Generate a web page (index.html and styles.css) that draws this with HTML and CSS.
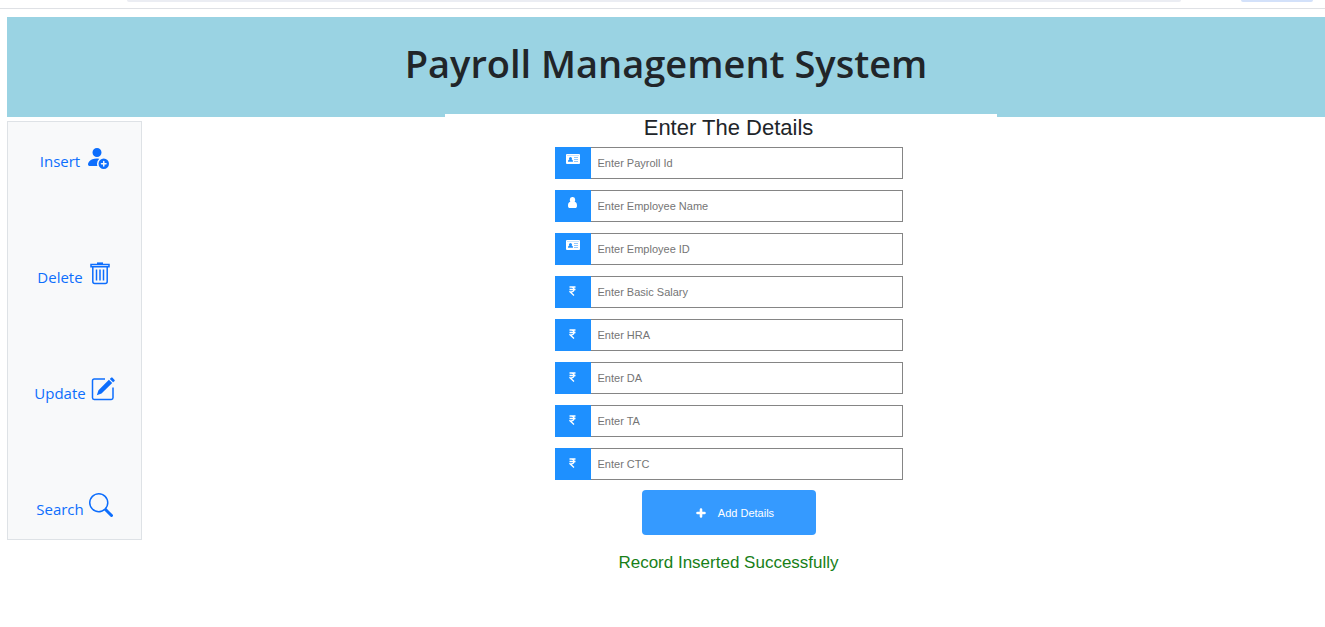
FILE: index.html
```
<!DOCTYPE html>
<html lang="en">
<head>
<meta charset="utf-8">
<title>Payroll Management System</title>
<link rel="stylesheet" href="styles.css">
</head>
<body>
<svg class="sprite" aria-hidden="true">
  <symbol id="card" viewBox="0 0 14 10">
    <path fill="currentColor" fill-rule="evenodd" d="M1 0h12a1 1 0 0 1 1 1v8a1 1 0 0 1-1 1H1a1 1 0 0 1-1-1V1a1 1 0 0 1 1-1zM2 7.700h5C7 6.300 6.300 5.700 5.600 5.600a1.500 1.500 0 1 0-2.200 0C2.700 5.700 2 6.300 2 7.700zM8 3.600v.5h4v-.5zM8 5.400v.5h4v-.5zM8 7.200v.5h4v-.5zM1 1.400v.3h12v-.3z"/>
  </symbol>
  <symbol id="user" viewBox="0 0 9 11">
    <path fill="currentColor" d="M4.500 0a2.600 2.800 0 0 1 2.700 2.900q0 1.100-.6 1.900C8.400 5 9 6.800 9 8.700 9 10.200 8.300 11 7.200 11H1.800C.7 11 0 10.200 0 8.700 0 6.800.6 5 2.400 4.800q-.6-.8-.6-1.900A2.600 2.800 0 0 1 4.500 0z"/>
  </symbol>
  <symbol id="rupee" viewBox="0 0 7 10">
    <path fill="none" stroke="currentColor" stroke-width="1.300" d="M.5 1h6M.5 3.500h6M.7 1h1.800c3.300 0 3.300 4.800 0 4.800H1l4 3.700"/>
  </symbol>
</svg>

<div class="browser-edge" aria-hidden="true"><span class="address"></span><span class="chip"></span></div>

<div class="page">
  <header class="banner"><h1 class="title">Payroll Management System</h1></header>
  <div class="content">
    <nav class="sidebar">
      <a class="nav-link" href="#insert">Insert
        <svg class="nav-icon" viewBox="0 0 16 16" fill="currentColor"><path d="M12.500 16a3.500 3.500 0 1 0 0-7 3.500 3.500 0 0 0 0 7m.5-5v1h1a.5.5 0 0 1 0 1h-1v1a.5.5 0 0 1-1 0v-1h-1a.5.5 0 0 1 0-1h1v-1a.5.5 0 0 1 1 0m-2-6a3 3 0 1 1-6 0 3 3 0 0 1 6 0"/><path d="M2 13c0 1 1 1 1 1h5.256A4.500 4.500 0 0 1 8 12.500a4.500 4.500 0 0 1 1.544-3.393Q8.844 9.002 8 9c-5 0-6 3-6 4"/></svg>
      </a>
      <a class="nav-link" href="#delete">Delete
        <svg class="nav-icon" viewBox="0 0 24 24" fill="none" stroke="currentColor" stroke-width="1.500"><path d="M3 3.500h18v2.200H3zM4.800 6v14.500q0 2 2 2h10.400q2 0 2-2V6M8.500 8.500v11M12 8.500v11M15.500 8.500v11"/><path d="M9 2.400h6" stroke-width="2"/></svg>
      </a>
      <a class="nav-link" href="#update">Update
        <svg class="nav-icon" viewBox="0 0 24 24" fill="none" stroke="currentColor" stroke-width="1.500"><path d="M14 2H3.200Q1.500 2 1.500 3.700v17.100q0 1.700 1.700 1.700h17.100q1.700 0 1.700-1.700V10.500"/><path fill="currentColor" stroke="none" d="M17.900 2.800l3.300 3.300L10.500 16.600l-4.700 1.600 1.700-4.900zM18.800 2l1.500-1.400q.5-.4 1 0l2.300 2.300q.4.500 0 1l-1.500 1.400z"/></svg>
      </a>
      <a class="nav-link" href="#search">Search
        <svg class="nav-icon" viewBox="0 0 16 16" fill="currentColor"><path d="M11.742 10.344a6.500 6.500 0 1 0-1.397 1.398h-.001q.044.060.098.115l3.850 3.850a1 1 0 0 0 1.415-1.414l-3.850-3.850a1 1 0 0 0-.115-.1zM12 6.500a5.500 5.500 0 1 1-11 0 5.500 5.500 0 0 1 11 0"/></svg>
      </a>
    </nav>
    <main class="main">
      <form class="panel">
        <h2 class="panel-title">Enter The Details</h2>
        <div class="fields">
          <div class="field"><label class="tag" for="payroll" aria-label="Payroll Id"><svg class="card-icon"><use href="#card"/></svg></label><input class="input" id="payroll" placeholder="Enter Payroll Id"></div>
          <div class="field"><label class="tag" for="name" aria-label="Employee Name"><svg class="user-icon"><use href="#user"/></svg></label><input class="input" id="name" placeholder="Enter Employee Name"></div>
          <div class="field"><label class="tag" for="employee" aria-label="Employee ID"><svg class="card-icon"><use href="#card"/></svg></label><input class="input" id="employee" placeholder="Enter Employee ID"></div>
          <div class="field"><label class="tag money" for="salary" aria-label="Basic Salary"><svg class="rupee-icon"><use href="#rupee"/></svg></label><input class="input" id="salary" placeholder="Enter Basic Salary"></div>
          <div class="field"><label class="tag money" for="hra" aria-label="HRA"><svg class="rupee-icon"><use href="#rupee"/></svg></label><input class="input" id="hra" placeholder="Enter HRA"></div>
          <div class="field"><label class="tag money" for="da" aria-label="DA"><svg class="rupee-icon"><use href="#rupee"/></svg></label><input class="input" id="da" placeholder="Enter DA"></div>
          <div class="field"><label class="tag money" for="ta" aria-label="TA"><svg class="rupee-icon"><use href="#rupee"/></svg></label><input class="input" id="ta" placeholder="Enter TA"></div>
          <div class="field"><label class="tag money" for="ctc" aria-label="CTC"><svg class="rupee-icon"><use href="#rupee"/></svg></label><input class="input" id="ctc" placeholder="Enter CTC"></div>
        </div>
        <button class="submit" type="button"><svg class="plus-icon" viewBox="0 0 10 10"><path d="M5 1.500v7M1.500 5h7" stroke="currentColor" stroke-width="2.600" stroke-linecap="round"/></svg>Add Details</button>
        <p class="status">Record Inserted Successfully</p>
      </form>
    </main>
  </div>
</div>
</body>
</html>
```
FILE: styles.css
```
* { box-sizing: border-box; }
body { margin: 0; background: #fff; color: #212529; font-family: "Open Sans", "Noto Sans", sans-serif; }
.sprite { display: none; }
.browser-edge { height: 9px; border-bottom: 1px solid #dfe1e5; display: flex; align-items: flex-start; padding: 0 12px 0 127px; gap: 60px; }
.address { flex: 1; height: 2px; background: #ebedf3; border-radius: 0 0 12px 12px; }
.chip { width: 72px; height: 2px; background: #d3e1fa; border-radius: 0 0 12px 12px; }
.page { padding: 8px 0 0 7px; }
.banner { height: 100px; padding-top: 22px; background: #9ad3e3; text-align: center; }
.title { margin: 0; font-size: 38px; line-height: 48px; font-weight: 600; }
.content { display: flex; align-items: flex-start; }
.sidebar { width: 135px; margin-top: 4px; padding: 23px 0 15px; display: flex; flex-direction: column; gap: 85px; border: 1px solid #dee2e6; background: #f8f9fa; }
.nav-link { display: flex; justify-content: center; gap: 5px; height: 31px; color: #0d6efd; font-size: 15px; line-height: 32px; text-decoration: none; }
.nav-icon { width: 24px; height: 24px; flex: none; }
.main { flex: 1; display: flex; justify-content: center; padding-right: 26px; }
.panel { width: 552px; margin-top: -3px; padding: 0 94px 0 110px; display: flex; flex-direction: column; align-items: center; background: #fff; font-family: "Liberation Sans", Arial, sans-serif; }
.panel-title { margin: 0 0 5px; font-size: 22px; line-height: 28px; font-weight: 400; }
.fields { width: 100%; display: grid; gap: 11px; }
.field { display: flex; height: 32px; }
.tag { width: 36px; flex: none; display: flex; justify-content: center; padding-top: 7px; background: #1e90ff; color: #fff; }
.money { padding-top: 10px; }
.card-icon { width: 14px; height: 10px; }
.user-icon { width: 9px; height: 11px; }
.rupee-icon { width: 7px; height: 10px; }
.input { flex: 1; min-width: 0; padding: 0 7px; border: 1px solid #858585; border-left-width: 0; border-radius: 0; background: #fff; font-family: inherit; font-size: 11px; color: #212529; }
.input::placeholder { color: #757575; opacity: 1; }
.submit { width: 174px; height: 45px; margin-top: 10px; padding: 0 0 0 13px; display: flex; align-items: center; justify-content: center; gap: 12px; border: 0; border-radius: 4px; background: #359aff; color: #fff; font-family: inherit; font-size: 11px; }
.plus-icon { width: 10px; height: 10px; }
.status { margin: 16px 0 0; color: #188018; font-size: 17px; line-height: 24px; }
```
